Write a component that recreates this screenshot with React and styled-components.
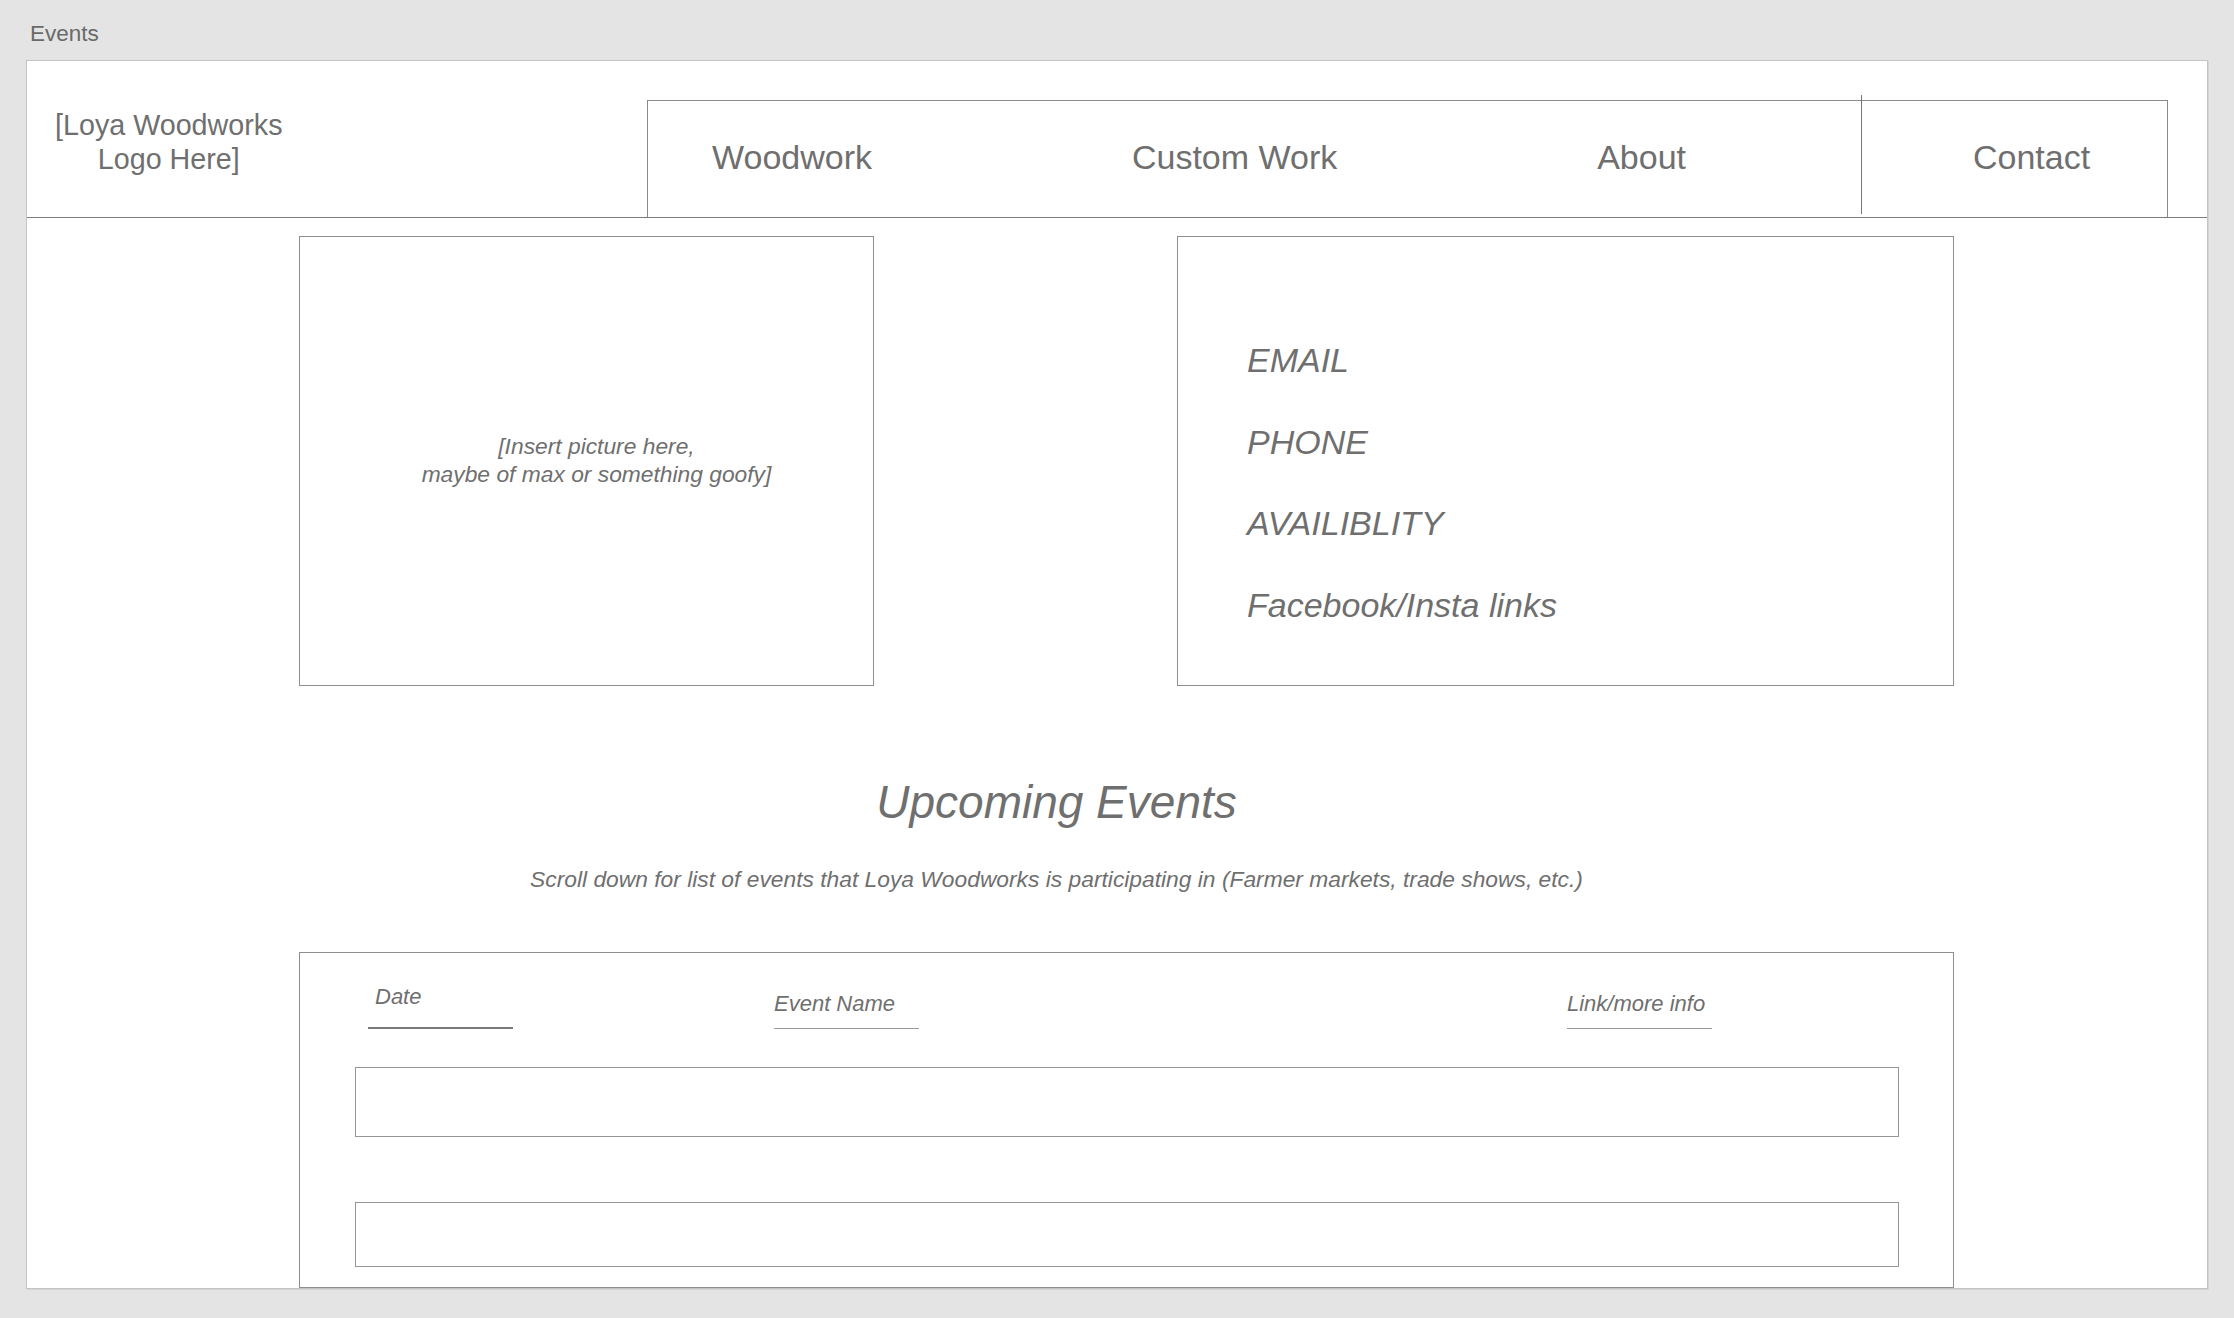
import React from "react";
import styled, { createGlobalStyle } from "styled-components";

const GlobalStyle = createGlobalStyle`
  html, body {
    margin: 0;
    padding: 0;
    background: #e4e4e4;
    font-family: "Liberation Sans", Arial, sans-serif;
    color: #6f6f6f;
  }
  * { box-sizing: border-box; }
`;

const Page = styled.div`
  width: 2234px;
  height: 1318px;
  padding: 0 26px 0 26px;
  overflow: hidden;
`;

const BoardLabel = styled.div`
  height: 60px;
  padding: 22px 0 0 4px;
  font-size: 22.5px;
  line-height: 24px;
  color: #6a6a6a;
`;

const Artboard = styled.div`
  height: 1229px;
  background: #fff;
  border: 1px solid #c4c4c4;
  box-shadow: 1px 1px 0 #d4d4d4;
  overflow: hidden;
`;

const Header = styled.header`
  height: 157px;
  display: flex;
  align-items: flex-end;
  border-bottom: 1px solid #7c7c7c;
  border-left: 1px solid #7c7c7c;
  margin-left: -1px;
`;

const Logo = styled.div`
  align-self: center;
  margin: 5px 0 0 28px;
  font-size: 28.7px;
  line-height: 34px;
  text-align: center;
  color: #6f6f6f;
`;

const Nav = styled.nav`
  margin-left: auto;
  margin-right: 39px;
  width: 1521px;
  height: 117px;
  display: flex;
  border: 1px solid #8a8a8a;
  border-bottom: none;
`;

const NavMain = styled.div`
  flex: 1;
  display: flex;
  align-items: center;
  justify-content: space-between;
  padding: 0 175px 5px 64px;
`;

const NavItem = styled.span`
  font-size: 34px;
  line-height: 40px;
  color: #6f6f6f;
  white-space: nowrap;
`;

const NavContact = styled.div`
  width: 306px;
  margin: -6px 0 3px 0;
  padding: 4px 0 0 111px;
  display: flex;
  align-items: center;
  border-left: 1px solid #777;
`;

const Main = styled.main`
  padding-left: 272px;
  width: 1927px;
`;

const BoxRow = styled.div`
  display: flex;
  gap: 303px;
  margin-top: 18px;
`;

const Box = styled.div`
  width: ${(p) => p.$w}px;
  height: 450px;
  border: 1px solid #8f8f8f;
`;

const PictureBox = styled(Box)`
  display: flex;
  align-items: center;
  justify-content: center;
  padding: 0 0 2px 20px;
`;

const Placeholder = styled.p`
  margin: 0;
  font-size: 22.8px;
  line-height: 28px;
  font-style: italic;
  text-align: center;
  color: #6f6f6f;
`;

const ContactList = styled(Box)`
  display: flex;
  flex-direction: column;
  gap: 41.7px;
  padding: 103px 0 0 69px;
`;

const ContactItem = styled.div`
  font-size: 34px;
  line-height: 40px;
  font-style: italic;
  color: #6f6f6f;
`;

const Intro = styled.section`
  width: 1655px;
  padding-right: 140px;
  text-align: center;
`;

const Heading = styled.h1`
  margin: 88px 0 0;
  font-size: 46px;
  line-height: 56px;
  font-weight: normal;
  font-style: italic;
  color: #6f6f6f;
`;

const Subtitle = styled.p`
  margin: 35px 0 0;
  font-size: 22.8px;
  line-height: 28px;
  font-style: italic;
  color: #6f6f6f;
`;

const EventsBox = styled.div`
  width: 1655px;
  height: 336px;
  margin-top: 59px;
  border: 1px solid #8f8f8f;
`;

const ColumnHeads = styled.div`
  display: grid;
  grid-template-columns: 406px 793px 145px;
  align-items: end;
  padding: 30px 0 0 68px;
`;

const ColumnHead = styled.div`
  width: 145px;
  white-space: nowrap;
  padding: 0 0 ${(p) => (p.$raised ? 16 : 10)}px ${(p) => (p.$raised ? 7 : 0)}px;
  border-bottom: ${(p) => (p.$raised ? "2px solid #7a7a7a" : "1px solid #9a9a9a")};
  font-size: 22px;
  line-height: 28px;
  font-style: italic;
  color: #6f6f6f;
`;

const EventRow = styled.div`
  height: ${(p) => p.$h}px;
  margin: ${(p) => p.$top}px 54px 0 55px;
  border: 1px solid #969696;
`;

export default function App() {
  return (
    <>
      <GlobalStyle />
      <Page>
        <BoardLabel>Events</BoardLabel>
        <Artboard>
          <Header>
            <Logo>
              [Loya Woodworks
              <br />
              Logo Here]
            </Logo>
            <Nav>
              <NavMain>
                <NavItem>Woodwork</NavItem>
                <NavItem>Custom Work</NavItem>
                <NavItem>About</NavItem>
              </NavMain>
              <NavContact>
                <NavItem>Contact</NavItem>
              </NavContact>
            </Nav>
          </Header>

          <Main>
            <BoxRow>
              <PictureBox $w={575}>
                <Placeholder>
                  [Insert picture here,
                  <br />
                  maybe of max or something goofy]
                </Placeholder>
              </PictureBox>
              <ContactList $w={777}>
                <ContactItem>EMAIL</ContactItem>
                <ContactItem>PHONE</ContactItem>
                <ContactItem>AVAILIBLITY</ContactItem>
                <ContactItem>Facebook/Insta links</ContactItem>
              </ContactList>
            </BoxRow>

            <Intro>
              <Heading>Upcoming Events</Heading>
              <Subtitle>
                Scroll down for list of events that Loya Woodworks is participating in (Farmer markets, trade shows, etc.)
              </Subtitle>
            </Intro>

            <EventsBox>
              <ColumnHeads>
                <ColumnHead $raised>Date</ColumnHead>
                <ColumnHead>Event Name</ColumnHead>
                <ColumnHead>Link/more info</ColumnHead>
              </ColumnHeads>
              <EventRow $h={70} $top={38} />
              <EventRow $h={65} $top={65} />
            </EventsBox>
          </Main>
        </Artboard>
      </Page>
    </>
  );
}
